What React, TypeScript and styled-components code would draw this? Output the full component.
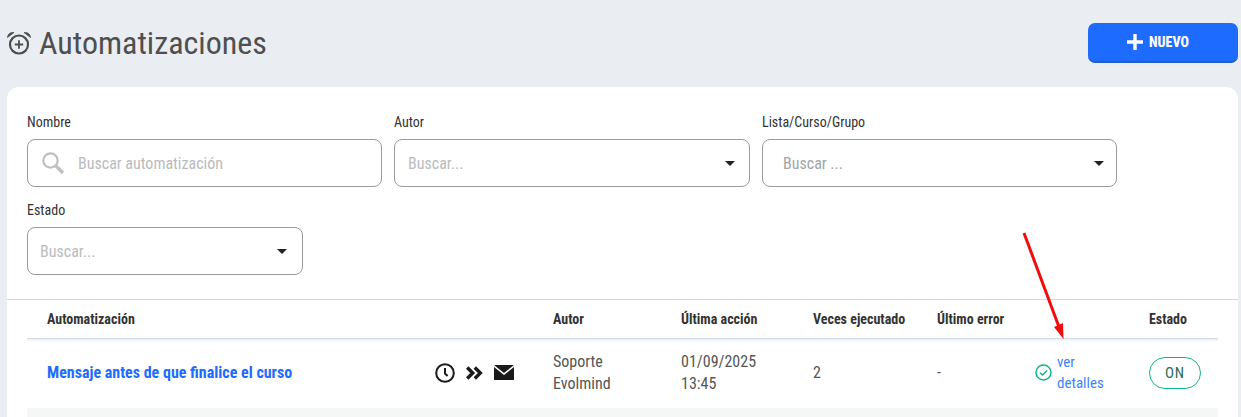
import React from "react";
import styled, { createGlobalStyle } from "styled-components";

const Global = createGlobalStyle`
  html, body { margin: 0; padding: 0; height: 417px; overflow: hidden; background: #eaedf1; }
  body { font-family: "Roboto Condensed", Roboto, "Liberation Sans", sans-serif; }
  * { box-sizing: border-box; }
`;

const Page = styled.div`
  position: relative;
  height: 417px;
  overflow: hidden;
  padding: 0 3px 0 7px;
`;
const Header = styled.header`
  height: 87px;
  display: flex;
  align-items: flex-start;
  justify-content: space-between;
`;
const TitleWrap = styled.div`
  display: flex;
  align-items: center;
  gap: 7px;
  padding-top: 22px;
`;
const Title = styled.h1`
  margin: 0;
  font-size: 32px;
  line-height: 42px;
  font-weight: 400;
  color: #4f4f4f;
`;
const NewButton = styled.button`
  margin-top: 23px;
  width: 150px;
  height: 40px;
  border: 0;
  border-bottom: 2px solid #1f5fc7;
  border-radius: 7px;
  background: #1e6bff;
  color: #fff;
  padding: 0 0 0 39px;
  display: flex;
  align-items: center;
  gap: 6px;
  font-family: inherit;
  font-size: 14px;
  font-weight: 800;
`;
const Card = styled.main`
  background: #fff;
  border-radius: 12px 12px 0 0;
  height: 330px;
`;
const Filters = styled.section`
  padding: 25px 20px 0;
  height: 213px;
  border-bottom: 1px solid #d3d9de;
`;
const FilterRow = styled.div`
  display: flex;
  gap: 12px;
  margin-bottom: 13px;
`;
const Field = styled.div<{ $w: number }>`
  width: ${(p) => p.$w}px;
`;
const Label = styled.label`
  display: block;
  font-size: 14px;
  line-height: 21px;
  height: 27px;
  color: #333;
`;
const Control = styled.div<{ $pl: number; $pr?: number }>`
  height: 48px;
  border: 1px solid #9a9a9a;
  border-radius: 8px;
  padding: 0 ${(p) => p.$pr ?? 14}px 0 ${(p) => p.$pl}px;
  display: flex;
  align-items: center;
  justify-content: space-between;
`;
const SearchControl = styled(Control)`
  justify-content: flex-start;
  gap: 13px;
`;
const Placeholder = styled.span<{ $dark?: boolean }>`
  color: ${(p) => (p.$dark ? "#a2a5a7" : "#b9bcbe")};
  font-size: 16px;
`;
const Caret = styled.span`
  width: 0;
  height: 0;
  border-left: 5.5px solid transparent;
  border-right: 5.5px solid transparent;
  border-top: 5.5px solid #222;
`;
const Table = styled.section`
  margin: 0 20px;
`;
const Cols = `
  display: grid;
  grid-template-columns: 506px 128px 132px 124px 99px 113px 89px;
  align-items: center;
`;
const HeadRow = styled.div`
  ${Cols}
  height: 39px;
  padding-bottom: 1px;
  border-bottom: 1px solid #d3d9de;
  box-shadow: 0 2px 0 #f1f3f4;
`;
const Th = styled.div`
  padding-left: 20px;
  font-size: 14px;
  font-weight: 700;
  color: #333;
`;
const BodyRow = styled.div`
  ${Cols}
  height: 69px;
  padding-bottom: 2px;
  font-size: 16px;
  color: #555;
`;
const Td = styled.div`
  padding-left: 20px;
  line-height: 22px;
`;
const NameCell = styled.div`
  padding: 0 19px 0 20px;
  display: flex;
  align-items: center;
  justify-content: space-between;
`;
const NameLink = styled.a`
  color: #1e6bff;
  font-weight: 700;
  font-size: 16px;
`;
const Icons = styled.div`
  display: flex;
  align-items: center;
  gap: 11px;
`;
const DetailCell = styled.div`
  display: flex;
  align-items: center;
  gap: 4px;
  padding-left: 20px;
`;
const DetailLink = styled.a`
  color: #3f83f8;
  font-size: 15px;
  line-height: 21px;
  width: 50px;
`;
const Toggle = styled.div`
  margin-left: 20px;
  width: 52px;
  height: 32px;
  border: 1px solid #12b48a;
  border-radius: 16px;
  display: flex;
  align-items: center;
  justify-content: center;
  color: #2a6a60;
  font-size: 15px;
  letter-spacing: 0.8px;
`;
const NextRow = styled.div`
  height: 10px;
  background: #f5f6f6;
`;
const ArrowOverlay = styled.svg`
  position: absolute;
  left: 1015px;
  top: 225px;
  pointer-events: none;
`;

const Alarm = () => (
  <svg width="25" height="24" viewBox="0 0 25 24" fill="none" stroke="#4d4d4d" strokeWidth="2.2">
    <circle cx="12" cy="13.5" r="9" />
    <path d="M7.8 13.5h8.4M12 9.3v8.4" strokeWidth="1.8" />
    <path d="M0.5 6.5C1 2.5 3.5 1.2 7 1.5zM23.5 6.5C23 2.5 20.5 1.2 17 1.5z" fill="#4d4d4d" strokeWidth="0.8" />
  </svg>
);
const SearchIcon = () => (
  <svg width="24" height="24" viewBox="0 0 24 24" fill="none" stroke="#bdbfc0">
    <circle cx="9.5" cy="9.5" r="7.2" strokeWidth="2.2" />
    <path d="M15 15l7 7" strokeWidth="3.2" />
  </svg>
);
const Clock = () => (
  <svg width="20" height="20" viewBox="0 0 20 20" fill="none" stroke="#1a1a1a" strokeWidth="2">
    <circle cx="10" cy="10" r="8.8" />
    <path d="M10 5v5.5l2.6 2.4" />
  </svg>
);
const Chevrons = () => (
  <svg width="17" height="16" viewBox="0 0 17 16" fill="none" stroke="#1a1a1a" strokeWidth="3.4">
    <path d="M1.2 2.5L6.7 8l-5.5 5.5M8.8 2.5L14.3 8 8.8 13.5" />
  </svg>
);
const Mail = () => (
  <svg width="20" height="15" viewBox="0 0 20 15">
    <path d="M0 0h20L10 8z" fill="#1a1a1a" />
    <path d="M0 2l10 8 10-8v13H0z" fill="#1a1a1a" />
  </svg>
);
const Plus = () => (
  <svg width="16" height="16" viewBox="0 0 16 16" stroke="#fff" strokeWidth="3.4" style={{ flex: "none" }}>
    <path d="M8 0v16M0 8h16" />
  </svg>
);
const CheckCircle = () => (
  <svg width="17" height="17" viewBox="0 0 17 17" fill="none" stroke="#12b48a" strokeWidth="1.5" style={{ flex: "none", marginLeft: "-1px", marginRight: "1px" }}>
    <circle cx="8.5" cy="8.5" r="7.5" />
    <path d="M5 8.7l2.5 2.3L12 6.5" />
  </svg>
);

export default function App() {
  return (
    <>
      <Global />
      <Page>
        <Header>
          <TitleWrap>
            <Alarm />
            <Title>Automatizaciones</Title>
          </TitleWrap>
          <NewButton>
            <Plus />
            NUEVO
          </NewButton>
        </Header>
        <Card>
          <Filters>
            <FilterRow>
              <Field $w={355}>
                <Label>Nombre</Label>
                <SearchControl $pl={13}>
                  <SearchIcon />
                  <Placeholder>Buscar automatización</Placeholder>
                </SearchControl>
              </Field>
              <Field $w={356}>
                <Label>Autor</Label>
                <Control $pl={13}>
                  <Placeholder>Buscar...</Placeholder>
                  <Caret />
                </Control>
              </Field>
              <Field $w={355}>
                <Label>Lista/Curso/Grupo</Label>
                <Control $pl={20} $pr={12}>
                  <Placeholder $dark>Buscar ...</Placeholder>
                  <Caret />
                </Control>
              </Field>
            </FilterRow>
            <FilterRow>
              <Field $w={276}>
                <Label>Estado</Label>
                <Control $pl={12} $pr={15}>
                  <Placeholder>Buscar...</Placeholder>
                  <Caret />
                </Control>
              </Field>
            </FilterRow>
          </Filters>
          <Table>
            <HeadRow>
              <Th>Automatización</Th>
              <Th>Autor</Th>
              <Th>Última acción</Th>
              <Th>Veces ejecutado</Th>
              <Th>Último error</Th>
              <Th />
              <Th>Estado</Th>
            </HeadRow>
            <BodyRow>
              <NameCell>
                <NameLink>Mensaje antes de que finalice el curso</NameLink>
                <Icons>
                  <Clock />
                  <Chevrons />
                  <Mail />
                </Icons>
              </NameCell>
              <Td>Soporte Evolmind</Td>
              <Td>01/09/2025 13:45</Td>
              <Td>2</Td>
              <Td>-</Td>
              <DetailCell>
                <CheckCircle />
                <DetailLink>ver detalles</DetailLink>
              </DetailCell>
              <Toggle>ON</Toggle>
            </BodyRow>
            <NextRow />
          </Table>
        </Card>
        <ArrowOverlay width="60" height="120" viewBox="0 0 60 120">
          <path d="M9 8L44 102" stroke="#f20d0d" strokeWidth="3" fill="none" />
          <path d="M39 102l9-4 0.5 16z" fill="#f20d0d" />
        </ArrowOverlay>
      </Page>
    </>
  );
}
